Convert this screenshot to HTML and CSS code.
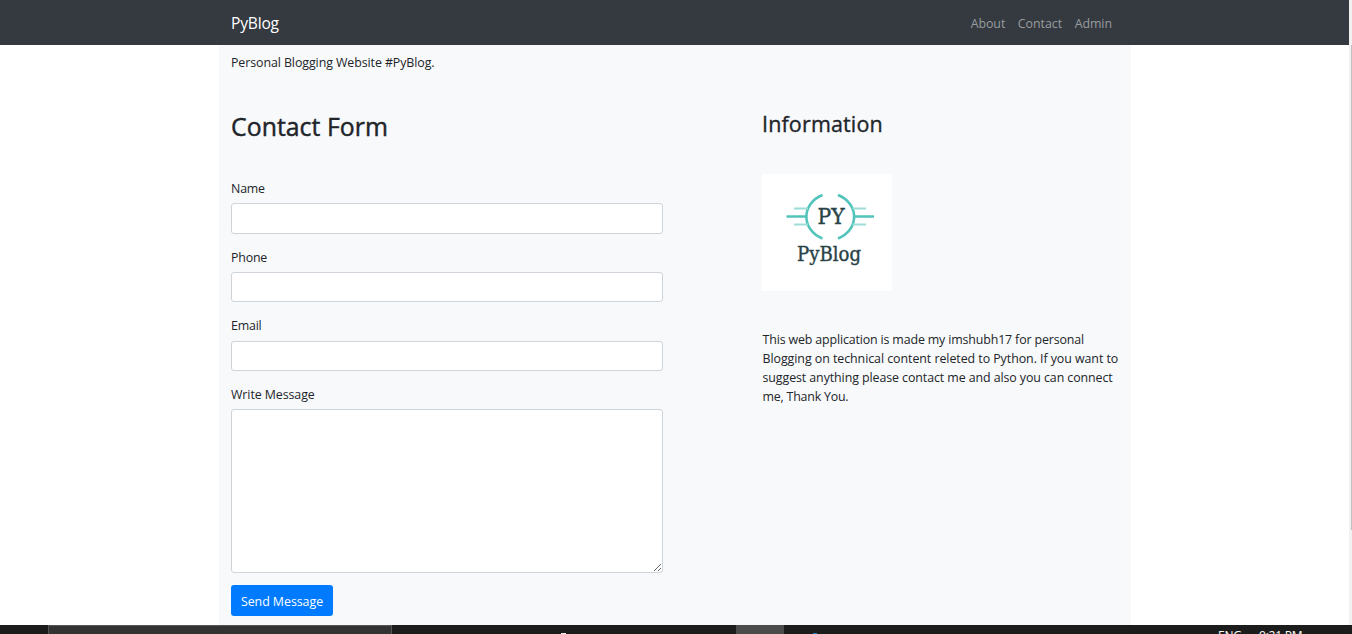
FILE: index.html
```html
<!DOCTYPE html>
<html lang="en">
<head>
<meta charset="utf-8">
<title>PyBlog</title>
<link rel="stylesheet" href="styles.css">
</head>
<body>
<div class="viewport">
  <div class="page">
    <nav class="navbar">
      <div class="navbar-inner">
        <a class="brand">PyBlog</a>
        <div class="links"><a>About</a><a>Contact</a><a>Admin</a></div>
      </div>
    </nav>
    <main class="container">
      <p class="tagline">Personal Blogging Website #PyBlog.</p>
      <div class="row">
        <form class="form">
          <h2 class="form-title">Contact Form</h2>
          <label class="label" for="name">Name</label>
          <input class="control" id="name" type="text">
          <label class="label" for="phone">Phone</label>
          <input class="control" id="phone" type="text">
          <label class="label" for="email">Email</label>
          <input class="control" id="email" type="text">
          <label class="label wide" for="message">Write Message</label>
          <textarea class="control message" id="message"></textarea>
          <button class="send" type="button">Send Message</button>
        </form>
        <aside class="info">
          <h3 class="info-title">Information</h3>
          <svg class="logo" width="130" height="117" viewBox="0 0 130 117">
            <rect width="130" height="117" fill="#fff"/>
            <g fill="none" stroke="#52c4bb">
              <path stroke-width="2.6" d="M60.500 21C39 29.500 39 56 60.500 64.500M76 21C97.500 29.500 97.500 56 76 64.500"/>
              <path stroke-width="2.4" d="M24.500 42.500H45M92 42.500H112"/>
              <path stroke-width="2" stroke="#9eddd7" d="M32 34.500H46M90.500 34.500H104M32 50.500H46M90.500 50.500H104"/>
            </g>
            <text class="logo-text" x="55.500" y="50" font-size="22" textLength="27" lengthAdjust="spacingAndGlyphs">PY</text>
            <text class="logo-text" x="35" y="87" font-size="20" textLength="64" lengthAdjust="spacingAndGlyphs">PyBlog</text>
          </svg>
          <p class="about-text"><span class="l1">This web application is made my imshubh17 for personal</span><br><span class="l2">Blogging on technical content releted to Python. If you want to</span><br><span class="l3">suggest anything please contact me and also you can connect</span><br><span class="l4">me, Thank You.</span></p>
        </aside>
      </div>
    </main>
  </div>
  <div class="scrollbar"><div class="thumb"></div></div>
</div>
<footer class="taskbar">
  <div class="search"></div>
  <div class="dot"></div>
  <div class="active-app"></div>
  <div class="dot blue"></div>
  <span class="lang">ENG</span>
  <span class="clock">9:21 PM</span>
</footer>
</body>
</html>
```
FILE: styles.css
```css
* { box-sizing: border-box; }
body { margin: 0; height: 634px; overflow: hidden; background: #fff; color: #212529; font: 12.4px/19.2px "Open Sans", "Noto Sans", sans-serif; letter-spacing: -0.2px; }
.viewport { display: flex; height: 625px; overflow: hidden; }
.page { flex: 1; }
.navbar { height: 45px; background: #343a40; }
.navbar-inner { width: 912px; margin: 0 auto 0 219px; padding: 0 19px 0 12px; height: 45px; display: flex; align-items: center; justify-content: space-between; }
.brand { color: #fff; font-size: 15.6px; padding-top: 2px; }
.links { display: flex; gap: 12.6px; color: #999c9f; padding-top: 2px; letter-spacing: -0.05px; }
.container { width: 912px; height: 580px; margin-left: 219px; padding: 8px 12px 0; background: #f8f9fb; }
.tagline { margin: 0; height: 20px; letter-spacing: -0.08px; }
.row { display: flex; justify-content: space-between; }
.form { width: 432px; display: flex; flex-direction: column; align-items: flex-start; padding-top: 38px; }
.form-title { margin: 0 0 37px; font-size: 24.8px; line-height: 31px; font-weight: 500; height: 31px; letter-spacing: 0.05px; -webkit-text-stroke: 0.45px #212529; }
.label { margin-bottom: 5.2px; height: 19.2px; }
.wide { letter-spacing: -0.08px; }
.control { width: 432px; height: 30.4px; margin: 0 0 13.8px; border: 1px solid #ced4da; border-radius: 3px; background: #fff; padding: 5px 9px; }
.message { height: 164px; margin-bottom: 12px; resize: both; }
.send { width: 102px; height: 31px; border: 0; border-radius: 3px; background: #007bff; color: #fff; font: inherit; letter-spacing: -0.04px; padding: 2px 0 0; white-space: nowrap; }
.info { width: 357px; padding-top: 38px; }
.info-title { margin: 0 0 37px; font-size: 21.5px; line-height: 26px; font-weight: 500; letter-spacing: 0.15px; -webkit-text-stroke: 0.35px #212529; }
.logo { display: block; margin-bottom: 39px; }
.logo-text { font-family: "DejaVu Serif", serif; fill: #294347; stroke: #294347; stroke-width: 0.4px; letter-spacing: 0; }
.about-text { margin: 0; padding-left: 0.5px; white-space: nowrap; line-height: 19px; }
.l1 { letter-spacing: -0.14px; }
.l2 { letter-spacing: -0.05px; }
.l3 { letter-spacing: -0.08px; }
.scrollbar { width: 3px; background: #f1f1f1; padding: 45px 0 0 2px; }
.thumb { height: 485px; background: #c1c1c1; }
.taskbar { position: relative; height: 9px; background: #1c1c1c; overflow: hidden; color: #fff; font-size: 12px; line-height: 16px; }
.search { position: absolute; left: 48px; top: 0; width: 344px; height: 12px; background: #333; border: 1px solid #555; }
.active-app { position: absolute; left: 736px; top: 0; width: 48px; height: 9px; background: #4b4b4b; }
.dot { position: absolute; left: 561px; top: 8px; width: 5px; height: 1px; background: #eee; }
.blue { left: 813px; width: 4px; background: #2581bd; }
.lang, .clock { position: absolute; top: 3px; left: 1218px; }
.clock { left: 1259px; }
```
